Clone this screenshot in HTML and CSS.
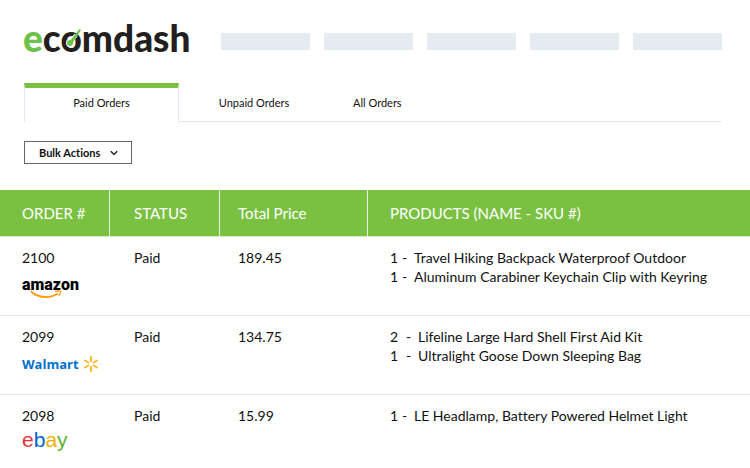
FILE: index.html
```html
<!DOCTYPE html>
<html lang="en">
<head>
<meta charset="utf-8">
<meta name="viewport" content="width=device-width, initial-scale=1">
<title>ecomdash – Orders</title>
<link rel="stylesheet" href="styles.css">
</head>
<body>
<header class="topbar">
  <a class="brand" href="#">
    <span class="brand-e">e</span>c<span class="brand-o">o<svg class="needle" viewBox="0 0 20 24" aria-hidden="true"><path d="M10 12 14 7" stroke="#fff" stroke-width="4"/><circle cx="8" cy="15" r="4" fill="#fff"/><circle cx="8" cy="15" r="3" fill="#6cc24a"/><path d="M7 14 17.500 1l1.500 1L10 16z" fill="#6cc24a"/></svg></span>mdash
  </a>
  <nav class="nav">
    <span class="nav-slot"></span><span class="nav-slot"></span><span class="nav-slot"></span><span class="nav-slot"></span><span class="nav-slot"></span>
  </nav>
</header>

<div class="tabs" role="tablist">
  <button class="tab tab-active" role="tab" aria-selected="true">Paid Orders</button>
  <button class="tab tab-wide" role="tab" aria-selected="false">Unpaid Orders</button>
  <button class="tab" role="tab" aria-selected="false">All Orders</button>
</div>

<div class="toolbar">
  <div class="bulk">
    <select class="bulk-select" aria-label="Bulk actions"><option>Bulk Actions</option></select>
    <svg class="bulk-arrow" viewBox="0 0 8 6" aria-hidden="true"><path d="M.8 1.200 4 4.400 7.200 1.200" fill="none" stroke="#111" stroke-width="1.300"/></svg>
  </div>
</div>

<table class="orders">
  <thead>
    <tr><th class="col-order">ORDER #</th><th class="col-status">STATUS</th><th class="col-price">Total Price</th><th>PRODUCTS (NAME - SKU #)</th></tr>
  </thead>
  <tbody>
    <tr>
      <td>2100
        <div class="shop amazon">amazon<svg class="smile" viewBox="0 0 32 9" aria-hidden="true"><path d="M1 1.500C9 8.500 20 8.500 28 3.500" fill="none" stroke="#f90" stroke-width="1.800"/><path d="M25 1.300Q29.500.3 30.500 1.300 31 3 28.700 6" fill="none" stroke="#f90" stroke-width="1.200"/></svg></div>
      </td>
      <td>Paid</td><td>189.45</td>
      <td><ul class="items">
        <li><span class="qty">1</span><span class="dash">-</span>Travel Hiking Backpack Waterproof Outdoor</li>
        <li><span class="qty">1</span><span class="dash">-</span>Aluminum Carabiner Keychain Clip with Keyring</li>
      </ul></td>
    </tr>
    <tr>
      <td>2099
        <div class="shop walmart">Walmart<svg class="spark" viewBox="0 0 16 16" aria-hidden="true"><path d="M8 1v4M8 11v4M2 4.500l3.400 2M10.600 9.500l3.400 2M14 4.500l-3.400 2M5.400 9.500l-3.400 2" stroke="#fdb827" stroke-width="2" stroke-linecap="round"/></svg></div>
      </td>
      <td>Paid</td><td>134.75</td>
      <td><ul class="items items-wide">
        <li><span class="qty">2</span><span class="dash">-</span>Lifeline Large Hard Shell First Aid Kit</li>
        <li><span class="qty">1</span><span class="dash">-</span>Ultralight Goose Down Sleeping Bag</li>
      </ul></td>
    </tr>
    <tr>
      <td>2098
        <div class="shop ebay"><span class="red">e</span><span class="blue">b</span><span class="yellow">a</span><span class="green">y</span></div>
      </td>
      <td>Paid</td><td>15.99</td>
      <td><ul class="items">
        <li><span class="qty">1</span><span class="dash">-</span>LE Headlamp, Battery Powered Helmet Light</li>
      </ul></td>
    </tr>
  </tbody>
</table>
</body>
</html>
```
FILE: styles.css
```css
* { box-sizing: border-box; }
body { margin: 0; background: #fff; color: #111; font-family: Lato, "Liberation Sans", sans-serif; font-size: 14px; line-height: 19px; font-variant-ligatures: none; }
button, select { font: inherit; color: inherit; font-variant-ligatures: none; }

.topbar { display: flex; align-items: flex-start; justify-content: space-between; padding: 16px 28px 0 23px; }
.brand { font-family: Lato, sans-serif; font-weight: 900; font-size: 37px; line-height: 44px; color: #231f20; text-decoration: none; }
.brand-e { color: #6cc24a; }
.brand-o { position: relative; }
.needle { position: absolute; left: 2px; bottom: 8px; width: 20px; height: 24px; }
.nav { display: flex; gap: 14px; margin-top: 17px; }
.nav-slot { width: 89px; height: 17px; background: #e6eaf1; }

.tabs { display: flex; height: 39px; margin: 23px 28px 0 24px; box-shadow: inset 0 -1px #e4e6f1; }
.tab { padding: 0 24px; border: 0; background: none; font-size: 11px; }
.tab-active { width: 155px; padding-bottom: 5px; background: #fff; border: 1px solid #e4e6f1; border-top: 5px solid #7ac142; border-bottom: 0; }
.tab-wide { width: 150px; }

.toolbar { padding: 19px 24px 26px; }
.bulk { position: relative; width: 108px; height: 23px; }
.bulk-select { appearance: none; width: 100%; height: 100%; padding: 0 14px; border: 1px solid #666; border-radius: 0; background: #fff; font-size: 11px; font-weight: 700; line-height: 21px; }
.bulk-arrow { position: absolute; right: 14px; top: 9px; width: 8px; height: 6px; pointer-events: none; }

.orders { width: 100%; border-spacing: 0; table-layout: fixed; }
.orders th { height: 47px; padding: 0 0 0 22px; background: #7ac142; color: #fff; font-size: 15px; font-weight: 400; text-align: left; border-right: 1px solid #e9f5df; border-bottom: 1px solid #d3ebbf; }
.orders th:last-child { border-right: 0; }
.col-order, .col-status { width: 110px; }
.col-price { width: 148px; }
.orders td { height: 79px; padding: 11px 0 0 22px; vertical-align: top; border-bottom: 1px solid #e6e8f1; }
.orders tr:last-child td { border-bottom: 0; }
.orders th:nth-child(2), .orders td:nth-child(2) { padding-left: 24px; }
.orders th:nth-child(3), .orders td:nth-child(3) { padding-left: 18px; }

.items { margin: 0; padding: 0; list-style: none; }
.items li { display: flex; }
.qty { width: 12px; }
.dash { width: 12px; }
.items-wide .qty { width: 16px; }

.shop { display: flex; position: relative; height: 24px; line-height: 24px; margin-top: 6px; }
.amazon { font-family: Roboto, sans-serif; font-weight: 900; font-size: 16px; color: #000; }
.smile { position: absolute; left: 8px; bottom: -2px; width: 32px; height: 9px; }
.walmart { gap: 4px; align-items: center; font-family: "Open Sans", sans-serif; font-weight: 700; font-size: 13px; color: #0071ce; }
.spark { width: 16px; height: 16px; }
.ebay { margin-top: 3px; font-family: "Liberation Sans", sans-serif; font-size: 21px; }
.red { color: #e53238; }
.blue { color: #0064d2; }
.yellow { color: #f5af02; }
.green { color: #5cb130; }
```
